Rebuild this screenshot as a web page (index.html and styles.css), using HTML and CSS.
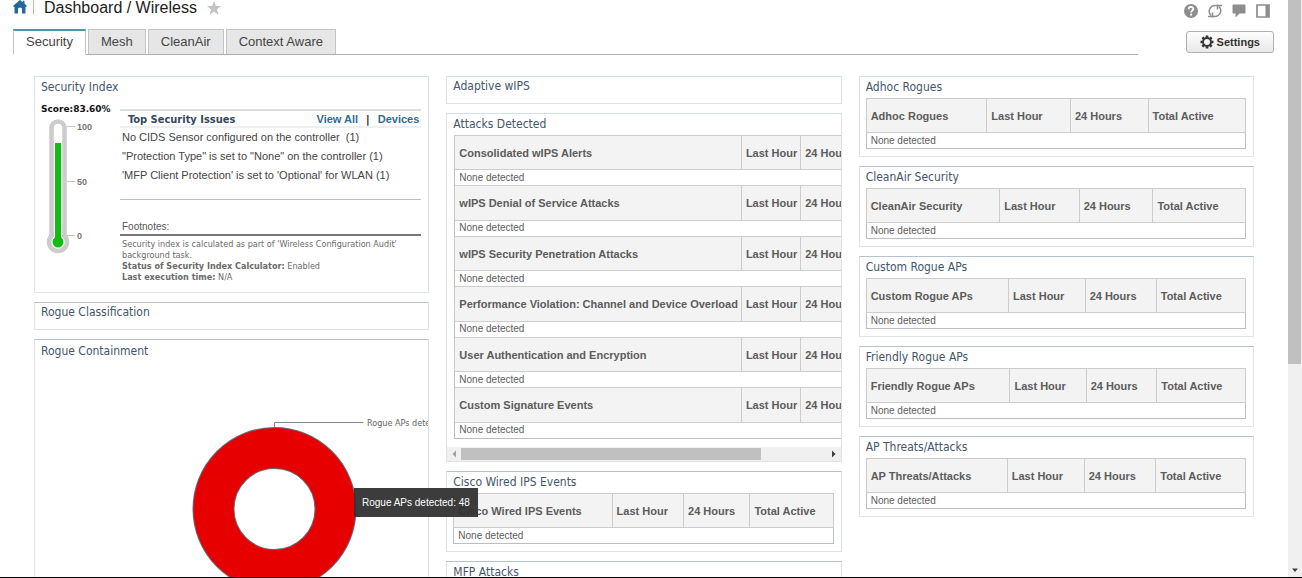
FILE: index.html
```html
<!DOCTYPE html>
<html lang="en">
<head>
<meta charset="utf-8">
<title>Dashboard / Wireless</title>
<link rel="stylesheet" href="styles.css">
</head>
<body>
<div class="app">
  <div class="page">
    <header class="topbar">
      <a class="home" href="#" aria-label="Home"><svg width="14" height="14" viewBox="0 0 14 14"><path d="M7 0 .5 5.500V7H1.500v6.500h3.500V8.500q2-2 4 0v5h3.500V7h1V5.500L11.500 3.800V.8H9.700v1.500z" fill="#1f699b"/></svg></a>
      <span class="divider"></span>
      <h1 class="title">Dashboard / Wireless</h1>
      <button class="icon-btn" aria-label="Add to favorites"><svg width="14" height="14" viewBox="0 0 14 14"><path d="M7 0 9 5h5l-4 3.400L11.500 14 7 10.600 2.500 14 4 8.400 0 5h5z" fill="#c3c3c3"/></svg></button>
      <div class="tools">
        <button class="icon-btn" aria-label="Help"><svg width="14" height="14" viewBox="0 0 14 14"><circle cx="7" cy="7" r="7" fill="#8d8d8d"/><path d="M4.700 5.200C4.700 2.200 9.400 2.300 9.300 5c0 1.500-2.200 1.700-2.200 3.500" fill="none" stroke="#fff" stroke-width="1.800"/><rect x="6.200" y="9.700" width="1.900" height="1.900" fill="#fff"/></svg></button>
        <button class="icon-btn" aria-label="Refresh"><svg width="14" height="14" viewBox="0 0 14 14" fill="none" stroke="#8d8d8d" stroke-width="1.500"><path d="M3 11.500C-.5 8 1.500 1.500 7.500 1.500h3M11 2.500c3.500 3.500 1.500 10-4.500 10h-3"/><path d="M9.500 5.500V1.500H14M4.500 8.500v4H0"/></svg></button>
        <button class="icon-btn" aria-label="Feedback"><svg width="14" height="14" viewBox="0 0 14 14"><path d="M1.500.5h11q1 0 1 1v7q0 1-1 1H7.500L3.500 13.500v-4h-2q-1 0-1-1v-7q0-1 1-1z" fill="#8d8d8d"/></svg></button>
        <button class="icon-btn" aria-label="Side panel"><svg width="14" height="14" viewBox="0 0 14 14"><path d="M1 1h12v12H1z" fill="#fff" stroke="#8d8d8d" stroke-width="1.700"/><path d="M9.500 1H13v12H9.500z" fill="#8d8d8d"/></svg></button>
      </div>
    </header>
    <div class="subbar">
      <nav class="tabs">
        <a class="tab tab-active" href="#">Security</a>
        <a class="tab" href="#">Mesh</a>
        <a class="tab" href="#">CleanAir</a>
        <a class="tab" href="#">Context Aware</a>
      </nav>
      <button class="settings"><svg width="14" height="14" viewBox="0 0 14 14"><circle cx="7" cy="7" r="4" fill="none" stroke="#333" stroke-width="1.900"/><path d="M7 .5v2M7 11.500v2M.5 7h2M11.500 7h2M2.400 2.400l1.400 1.400M10.200 10.200l1.400 1.400M11.600 2.400l-1.400 1.400M3.800 10.200l-1.400 1.400" stroke="#333" stroke-width="2.600"/></svg>Settings</button>
    </div>
    <main class="columns">
      <div class="column">
        <section class="panel index-panel">
          <h2 class="panel-title">Security Index</h2>
          <div class="index">
            <div class="gauge">
              <div class="score">Score:83.60%</div>
              <svg width="60" height="138" viewBox="0 0 60 138">
                <path d="M10.500 122V12a6.500 6.500 0 0 1 13 0v110" fill="#fff" stroke="#ccc" stroke-width="4.500"/>
                <circle cx="17" cy="126" r="9" fill="#fff" stroke="#ccc" stroke-width="4.500"/>
                <path d="M13 12a4 4 0 0 1 8 0v110h-8z" fill="#fff"/>
                <path d="M14 27h6v98h-6z" fill="#12bd12"/>
                <circle cx="17" cy="126" r="5.500" fill="#12bd12"/>
                <path d="M26 10.500h8M26 65.500h8M26 119.500h8" stroke="#c4c4c4"/>
                <g class="scale"><text x="36" y="14">100</text><text x="36" y="69">50</text><text x="36" y="123">0</text></g>
              </svg>
            </div>
            <div class="issues">
              <div class="issues-head">
                <h3 class="issues-title">Top Security Issues</h3>
                <a href="#">View All</a><span class="bar">|</span><a href="#">Devices</a>
              </div>
              <ul class="issue-list">
                <li>No CIDS Sensor configured on the controller &nbsp;(1)</li>
                <li>"Protection Type" is set to "None" on the controller (1)</li>
                <li>'MFP Client Protection' is set to 'Optional' for WLAN (1)</li>
              </ul>
              <h3 class="notes-title">Footnotes:</h3>
              <div class="notes">
                <p>Security index is calculated as part of 'Wireless Configuration Audit' background task.</p>
                <p><b>Status of Security Index Calculator:</b> Enabled</p>
                <p><b>Last execution time:</b> N/A</p>
              </div>
            </div>
          </div>
        </section>
        <section class="panel panel-strong panel-short"><h2 class="panel-title">Rogue Classification</h2></section>
        <section class="panel panel-strong containment">
          <h2 class="panel-title">Rogue Containment</h2>
          <div class="chart">
            <svg width="480" height="240" viewBox="0 0 480 240" role="img" aria-label="Rogue APs detected: 48">
              <circle cx="233.500" cy="147" r="61" fill="none" stroke="#656b7a" stroke-width="42"/>
              <circle cx="233.500" cy="147" r="61" fill="none" stroke="#e60000" stroke-width="40"/>
              <path d="M233.500 65v-4.500h89" fill="none" stroke="#7d8484"/>
              <text class="slice-label" x="326" y="64">Rogue APs detected</text>
            </svg>
          </div>
          <div class="tooltip">Rogue APs detected: 48</div>
        </section>
      </div>
      <div class="column">
        <section class="panel panel-short"><h2 class="panel-title">Adaptive wIPS</h2></section>
        <section class="panel attacks">
          <h2 class="panel-title">Attacks Detected</h2>
          <div class="clip">
            <table class="grid grid-attacks">
              <tr><th>Consolidated wIPS Alerts</th><th>Last Hour</th><th>24 Hours</th></tr>
              <tr><td colspan="3">None detected</td></tr>
              <tr><th>wIPS Denial of Service Attacks</th><th>Last Hour</th><th>24 Hours</th></tr>
              <tr><td colspan="3">None detected</td></tr>
              <tr><th>wIPS Security Penetration Attacks</th><th>Last Hour</th><th>24 Hours</th></tr>
              <tr><td colspan="3">None detected</td></tr>
              <tr><th>Performance Violation: Channel and Device Overload</th><th>Last Hour</th><th>24 Hours</th></tr>
              <tr><td colspan="3">None detected</td></tr>
              <tr><th>User Authentication and Encryption</th><th>Last Hour</th><th>24 Hours</th></tr>
              <tr><td colspan="3">None detected</td></tr>
              <tr><th>Custom Signature Events</th><th>Last Hour</th><th>24 Hours</th></tr>
              <tr><td colspan="3">None detected</td></tr>
            </table>
          </div>
          <div class="hscroll">
            <svg width="14" height="14" viewBox="0 0 14 14"><path d="M9 3.500v7L5.500 7z" fill="#a0a0a0"/></svg>
            <div class="htrack"><div class="hthumb"></div></div>
            <svg width="14" height="14" viewBox="0 0 14 14"><path d="M5 3.500v7L8.500 7z" fill="#404040"/></svg>
          </div>
        </section>
        <section class="panel panel-strong">
          <h2 class="panel-title">Cisco Wired IPS Events</h2>
          <table class="grid"><tr><th>Cisco Wired IPS Events</th><th>Last Hour</th><th>24 Hours</th><th>Total Active</th></tr><tr><td colspan="4">None detected</td></tr></table>
        </section>
        <section class="panel panel-strong">
          <h2 class="panel-title">MFP Attacks</h2>
        </section>
      </div>
      <div class="column">
        <section class="panel">
          <h2 class="panel-title">Adhoc Rogues</h2>
          <table class="grid"><tr><th>Adhoc Rogues</th><th>Last Hour</th><th>24 Hours</th><th>Total Active</th></tr><tr><td colspan="4">None detected</td></tr></table>
        </section>
        <section class="panel panel-strong">
          <h2 class="panel-title">CleanAir Security</h2>
          <table class="grid"><tr><th>CleanAir Security</th><th>Last Hour</th><th>24 Hours</th><th>Total Active</th></tr><tr><td colspan="4">None detected</td></tr></table>
        </section>
        <section class="panel panel-strong">
          <h2 class="panel-title">Custom Rogue APs</h2>
          <table class="grid"><tr><th>Custom Rogue APs</th><th>Last Hour</th><th>24 Hours</th><th>Total Active</th></tr><tr><td colspan="4">None detected</td></tr></table>
        </section>
        <section class="panel panel-strong">
          <h2 class="panel-title">Friendly Rogue APs</h2>
          <table class="grid"><tr><th>Friendly Rogue APs</th><th>Last Hour</th><th>24 Hours</th><th>Total Active</th></tr><tr><td colspan="4">None detected</td></tr></table>
        </section>
        <section class="panel panel-strong">
          <h2 class="panel-title">AP Threats/Attacks</h2>
          <table class="grid"><tr><th>AP Threats/Attacks</th><th>Last Hour</th><th>24 Hours</th><th>Total Active</th></tr><tr><td colspan="4">None detected</td></tr></table>
        </section>
      </div>
    </main>
  </div>
  <div class="vscroll">
    <div class="vthumb"></div>
    <svg width="14" height="14" viewBox="0 0 14 14"><path d="M4 5.500h6L7 9z" fill="#404040"/></svg>
  </div>
</div>
</body>
</html>
```
FILE: styles.css
```css
* { box-sizing: border-box; }

body {
  margin: 0;
  background: #fff;
  color: #444;
  font-family: "Liberation Sans", Arial, sans-serif;
  font-size: 11px;
}

h1, h2, h3, p, ul { margin: 0; padding: 0; font-weight: normal; }
svg { display: block; }
a { text-decoration: none; }

.app {
  display: flex;
  height: 100vh;
  overflow: hidden;
  border-bottom: 1px solid #000;
}

.page { flex: 1; min-width: 0; overflow: hidden; }

/* Header */
.topbar {
  display: flex;
  align-items: center;
  height: 21px;
  padding: 0 18px 0 13px;
}
.home { padding-bottom: 7px; }
.divider {
  width: 1px;
  height: 14px;
  margin: 0 10px 7px 6px;
  background: #b5b5b5;
}
.title {
  padding-bottom: 6px;
  color: #1c1c1c;
  font-size: 16px;
  line-height: 16px;
}
.icon-btn { padding: 0; border: 0; background: none; }
.title + .icon-btn { margin-left: 10px; padding-bottom: 6px; }
.tools { display: flex; gap: 10px; margin-left: auto; }

.subbar {
  display: flex;
  align-items: flex-end;
  gap: 48px;
  height: 34px;
  padding: 0 14px 0 13px;
}
.tabs {
  display: flex;
  flex: 1;
  gap: 2px;
  height: 26px;
  border-bottom: 1px solid #adadad;
}
.tab {
  height: 26px;
  padding: 0 12px;
  border: 1px solid #c4c4c4;
  border-bottom-color: #adadad;
  background: #e6e6e6;
  color: #444;
  font-size: 13px;
  line-height: 24px;
}
.tab-active {
  border-top: 2px solid #4a96a3;
  border-bottom-color: #fff;
  background: #fff;
  line-height: 22px;
}
.settings {
  display: flex;
  align-items: center;
  gap: 3px;
  height: 22px;
  margin-bottom: 2px;
  padding: 0 13px;
  border: 1px solid #b0b0b0;
  border-radius: 3px;
  background: linear-gradient(#fdfdfd, #e9e9e9);
  color: #333;
  font: bold 11px "Liberation Sans", Arial, sans-serif;
}

/* Dashboard columns */
.columns {
  display: grid;
  grid-template-columns: repeat(3, minmax(0, 1fr));
  gap: 17px;
  padding: 21px 34px 0;
}
.column { display: flex; flex-direction: column; gap: 9px; }
.panel {
  padding: 0 7px 7px 6px;
  border: 1px solid #dde3e6;
  border-top-color: #d3e2ea;
}
.panel-strong { border-top-color: #b4c3cb; }
.panel-title {
  color: #42566a;
  font-family: "DejaVu Sans Condensed", "DejaVu Sans", sans-serif;
  font-size: 12px;
  font-stretch: condensed;
  line-height: 21px;
}
.panel-short .panel-title { line-height: 19px; }

.grid {
  width: 100%;
  border: 1px solid #b9bfc4;
  border-collapse: collapse;
  color: #5c5c5c;
  text-align: left;
  white-space: nowrap;
}
.grid th {
  height: 34px;
  padding: 0 3px 0 4px;
  border: 1px solid #ccc;
  background: #f3f3f3;
  font-size: 11px;
  line-height: 12px;
}
.grid td {
  height: 16px;
  padding: 0 4px;
  font-size: 10px;
  line-height: 12px;
}

/* Attacks table runs wider than its panel */
.attacks { padding: 0; }
.attacks .panel-title { padding: 0 6px; }
.clip { overflow: hidden; padding: 0 0 8px 7px; }
.grid-attacks { width: auto; height: 304px; }
.hscroll { display: flex; height: 14px; background: #f0f0f0; }
.htrack { flex: 1; padding: 1px 0; }
.hthumb { width: 82%; height: 12px; background: #c0c0c0; }

/* Security index */
.index-panel { padding-bottom: 9px; }
.index { display: flex; gap: 5px; }
.gauge { flex: none; width: 74px; padding-top: 4px; }
.score {
  color: #111;
  font: bold 9px/14px "DejaVu Sans", sans-serif;
  white-space: nowrap;
}
.scale text {
  fill: #777;
  font: bold 9px "Liberation Sans", Arial, sans-serif;
}
.issues { flex: 1; min-width: 0; padding-top: 11px; }
.issues-head {
  display: flex;
  height: 19px;
  padding: 0 2px 0 8px;
  border-top: 2px solid #d8dfe3;
  border-bottom: 2px solid #edf0f2;
  color: #111;
  font: bold 11px/17px "DejaVu Sans Condensed", "DejaVu Sans", sans-serif;
  font-stretch: condensed;
}
.issues-title { margin-right: auto; color: #35495c; font: inherit; }
.issues-head a {
  color: #2f6c93;
  font-family: "Liberation Sans", Arial, sans-serif;
}
.bar { margin: 0 8px; }
.issue-list {
  height: 72px;
  padding-left: 2px;
  border-bottom: 1px solid #b9c0c5;
  list-style: none;
  line-height: 19px;
}
.notes-title {
  padding: 20px 2px 1px;
  border-bottom: 2px solid #777;
  color: #555;
  font-size: 10px;
  line-height: 13px;
}
.notes {
  padding: 3px 2px 0;
  color: #6a6a6a;
  font: 9px/11px "DejaVu Sans Condensed", "DejaVu Sans", sans-serif;
  font-stretch: condensed;
}

/* Rogue containment */
.containment { position: relative; padding: 0 0 0 6px; }
.containment .panel-title { line-height: 22px; }
.chart { overflow: hidden; }
.slice-label {
  fill: #666;
  font: 9px "DejaVu Sans Condensed", "DejaVu Sans", sans-serif;
  font-stretch: condensed;
}
.tooltip {
  position: absolute;
  z-index: 2;
  top: 148px;
  left: 319px;
  padding: 0 8px;
  background: rgba(50, 50, 50, 0.95);
  color: #fff;
  font-size: 10px;
  line-height: 29px;
  white-space: nowrap;
}

/* Window scrollbar */
.vscroll {
  display: flex;
  flex-direction: column;
  justify-content: space-between;
  width: 14px;
  background: #f0f0f0;
}
.vthumb { width: 13px; height: 63%; background: #c0c0c0; }
```
